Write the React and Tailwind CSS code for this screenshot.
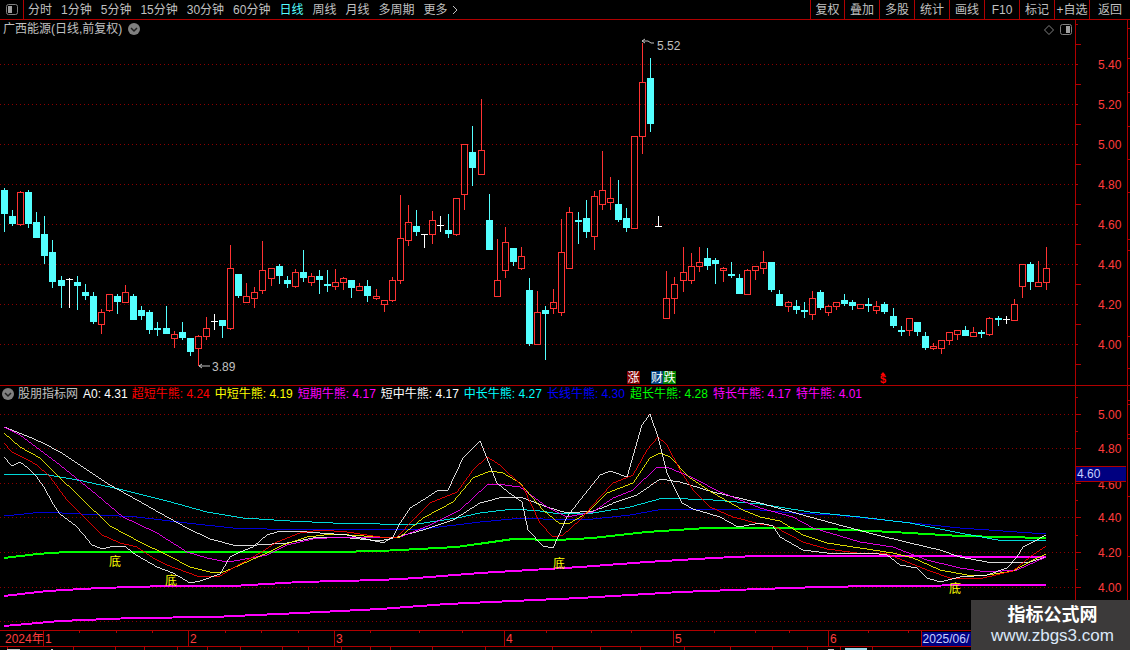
import React from "react";

const RED = "#ff3232";
const CYAN = "#54ffff";
const LINE = "#b00000";

// wickTop, wickBottom, bodyTop, bodyBottom, type (c = down, r = up, w = doji)
const candles = [
  [188,232,190,214,"c"],[210,226,216,224,"c"],[191,226,192,225,"r"],[190,228,192,224,"c"],[212,238,222,238,"c"],
  [216,264,234,256,"c"],[240,288,252,282,"c"],[276,308,280,286,"c"],[278,308,279,280,"w"],[276,310,282,286,"c"],
  [284,300,292,296,"c"],[292,324,296,322,"c"],[309,334,312,325,"r"],[294,312,294,311,"r"],[294,314,296,302,"c"],
  [285,303,292,303,"r"],[294,320,296,320,"c"],[306,320,310,316,"c"],[310,334,312,330,"c"],[322,336,328,330,"c"],
  [306,334,328,334,"c"],[331,348,334,339,"r"],[322,340,332,338,"c"],[338,356,338,352,"c"],[335,366,336,349,"r"],
  [317,340,328,337,"r"],[314,330,321,322,"w"],[320,338,320,326,"c"],[245,330,268,329,"r"],[274,298,274,296,"c"],
  [283,303,296,303,"r"],[287,308,292,299,"r"],[241,294,270,291,"r"],[268,286,268,279,"r"],[264,284,266,276,"c"],
  [276,288,280,284,"c"],[269,288,272,287,"r"],[250,282,272,278,"c"],[273,286,276,283,"r"],[270,294,276,280,"c"],
  [270,292,284,286,"c"],[269,290,282,287,"r"],[277,290,278,283,"r"],[280,298,280,288,"c"],[283,291,286,291,"r"],
  [280,302,286,296,"c"],[289,300,296,299,"r"],[300,312,300,305,"r"],[277,302,280,301,"r"],[195,284,238,281,"r"],
  [205,246,222,241,"r"],[210,236,226,232,"c"],[234,248,234,235,"w"],[211,244,220,235,"r"],[216,232,225,226,"w"],
  [214,238,230,234,"c"],[198,236,198,235,"r"],[144,210,144,195,"r"],[126,186,152,168,"c"],[99,175,150,175,"r"],
  [194,250,220,250,"c"],[239,297,280,297,"r"],[227,278,242,271,"r"],[248,266,248,262,"c"],[247,270,256,269,"r"],
  [278,346,290,344,"c"],[291,345,312,345,"r"],[306,360,310,314,"c"],[289,314,302,309,"r"],[219,316,252,313,"r"],
  [207,269,212,269,"r"],[212,244,220,222,"c"],[200,238,218,232,"c"],[191,250,196,237,"r"],[151,210,190,205,"r"],
  [177,210,198,203,"r"],[180,222,204,220,"c"],[208,232,218,228,"c"],[136,229,136,229,"r"],[43,154,82,137,"r"],
  [58,132,78,124,"c"],[216,227,226,227,"w"],[271,319,298,319,"r"],[277,314,284,299,"r"],[247,292,272,281,"r"],
  [253,284,266,281,"r"],[247,272,262,267,"r"],[248,270,258,266,"c"],[258,284,260,264,"c"],[267,282,268,271,"r"],
  [262,278,274,276,"c"],[274,294,278,294,"c"],[269,295,270,295,"r"],[266,280,266,271,"r"],[251,274,262,269,"r"],
  [262,292,262,290,"c"],[290,306,294,306,"c"],[301,312,302,307,"r"],[300,314,306,310,"c"],[302,318,310,312,"c"],
  [291,320,298,315,"r"],[290,310,292,308,"c"],[305,316,306,313,"r"],[302,310,302,307,"r"],[294,306,300,304,"c"],
  [300,310,302,306,"c"],[304,309,304,309,"r"],[298,312,304,306,"c"],[301,314,306,311,"r"],[302,314,304,312,"c"],
  [308,328,316,326,"c"],[326,336,330,332,"c"],[318,336,318,331,"r"],[322,336,322,332,"c"],[332,350,336,348,"c"],
  [343,350,346,349,"r"],[340,354,340,349,"r"],[332,345,332,341,"r"],[330,340,330,335,"r"],[326,336,330,336,"c"],
  [327,337,332,337,"r"],[330,338,332,334,"c"],[317,336,318,335,"r"],[316,326,318,320,"c"],[316,324,319,320,"w"],
  [299,321,304,321,"r"],[264,298,264,287,"r"],[262,290,264,282,"c"],[261,287,282,287,"r"],[247,290,268,283,"r"],
];

const lines = [
  { color: "#ff00ff", w: 2, d: "4,626 60,621 133,618 213,617 300,613 380,609 447,604 513,601 580,598 680,592 760,589 820,587 877,586 1007,585 1046,585" },
  { color: "#ff00ff", w: 2, d: "4,596 47,591 100,588 167,586 233,586 300,582 380,580 417,578 480,573 547,569 580,567 647,562 713,558 756,556 877,556 1046,557" },
  { color: "#00ff00", w: 2, d: "4,558 37,554 67,552 333,552 380,551 457,547 513,539 557,540 593,538 647,532 707,528 760,528 827,529 893,532 960,536 1046,538" },
  { color: "#0000ff", w: 0.85, d: "4,516 43,512 100,515 137,517 187,523 233,528 267,529 380,530 423,529 480,522 523,518 563,520 593,519 630,515 663,509 760,510 793,513 837,515 893,521 960,528 1046,534" },
  { color: "#00ffff", w: 0.85, d: "4,474 43,474 83,481 123,490 167,501 207,512 243,518 290,521 333,523 380,524 417,524 457,518 480,513 513,509 540,511 560,514 593,513 630,507 663,498 713,500 760,504 810,512 860,517 910,523 960,533 1003,541 1046,540" },
  { color: "#ffffff", w: 0.85, d: "4,427 27,436 43,443 60,452 87,470 110,485 137,500 160,513 187,528 210,539 233,545 257,545 287,543 313,538 340,537 380,541 393,538 423,530 453,520 480,503 503,497 523,498 547,507 567,513 593,511 613,503 637,495 660,479 680,482 713,492 760,503 810,517 843,526 877,535 910,543 940,550 960,557 987,562 1013,563 1030,562 1046,557" },
  { color: "#ff00ff", w: 0.85, d: "4,427 20,435 40,450 60,465 97,495 123,517 157,533 187,552 207,558 227,562 240,560 267,555 287,545 313,539 340,537 380,538 400,537 430,525 460,510 487,485 497,484 520,487 547,507 567,517 593,512 613,498 633,490 657,467 667,467 693,478 720,492 760,508 793,517 813,528 860,542 893,547 927,560 960,568 987,572 1017,570 1046,557" },
  { color: "#ffff00", w: 0.85, d: "4,433 20,447 40,458 57,475 80,497 110,526 140,542 167,555 190,567 210,572 223,572 233,568 267,553 283,545 307,537 333,534 380,537 400,537 423,518 453,502 473,478 490,471 503,473 520,483 543,510 560,524 570,523 587,513 607,493 633,483 650,458 660,453 670,457 690,478 713,493 743,510 760,517 780,521 803,535 827,543 860,548 893,553 913,558 940,570 967,575 987,575 1013,571 1033,560 1046,554" },
  { color: "#ff0000", w: 0.85, d: "4,443 12,452 28,460 37,465 50,477 67,500 80,513 102,535 120,543 137,547 153,558 167,565 197,576 220,576 233,568 260,553 277,542 300,533 320,530 347,532 380,537 397,537 413,520 430,503 457,492 473,470 487,457 500,465 523,487 540,523 553,537 563,535 580,520 600,497 613,483 633,475 647,450 658,437 667,445 680,470 693,490 710,507 733,517 760,524 773,526 790,535 803,542 827,549 857,553 887,554 907,562 927,570 950,578 983,578 1013,571 1030,557 1046,546" },
  { color: "#ffffff", w: 0.85, d: "4,457 12,466 20,462 28,468 36,476 44,487 52,502 60,514 68,520 76,526 84,535 92,545 102,549 110,547 125,546 133,553 143,559 157,567 173,573 190,583 200,581 220,574 230,557 240,552 253,547 267,535 277,532 293,531 320,533 347,535 380,542 383,543 393,537 400,523 410,508 423,500 438,490 448,490 463,458 480,441 497,483 508,492 522,502 528,530 543,546 553,548 567,517 580,500 600,475 610,471 627,477 642,425 650,414 658,437 667,473 682,503 693,509 720,517 738,527 760,523 773,526 780,537 803,550 827,553 870,553 887,555 900,565 917,568 927,578 940,582 960,577 987,575 1007,568 1017,557 1023,547 1033,542 1046,535" },
];

const bottoms = [[115, 561], [171, 580], [559, 563], [955, 588]];

const legend = [
  ["A0: 4.31", "-mr-px text-white"],
  ["超短牛熊: 4.24", "text-[#ff0000]"],
  ["中短牛熊: 4.19", "text-[#ffff00]"],
  ["短期牛熊: 4.17", "text-[#ff00ff]"],
  ["短中牛熊: 4.17", "text-white"],
  ["中长牛熊: 4.27", "text-[#00ffff]"],
  ["长线牛熊: 4.30", "text-[#0000ff]"],
  ["超长牛熊: 4.28", "text-[#00ff00]"],
  ["特长牛熊: 4.17", "text-[#ff00ff]"],
  ["特牛熊: 4.01", "text-[#ff00ff]"],
];

function CircleChevron() {
  return (
    <svg width="12" height="12" viewBox="0 0 12 12" className="shrink-0">
      <circle cx="6" cy="6" r="6" fill="#808080" />
      <path d="M3 5 L6 8 L9 5" fill="none" stroke="#202020" strokeWidth="1.5" />
    </svg>
  );
}

function PanelIcon({ flip }) {
  return (
    <svg width="12" height="11" viewBox="0 0 12 11" className="shrink-0">
      <rect x="0.5" y="0.5" width="11" height="10" rx="2" fill="#000" stroke="#808080" />
      <rect x={flip ? 6 : 2} y="2" width="4" height="7" fill="#a0a0a0" />
    </svg>
  );
}

function Grid({ ys }) {
  return ys.map((y) => (
    <line key={y} x1="0" x2="1075" y1={y + 0.5} y2={y + 0.5} stroke="#8c0000" strokeDasharray="1 3" />
  ));
}

function Candle({ c, i }) {
  const [wt, wb, bt, bb, type] = c;
  const x = Math.round(4 + i * 8.0775);
  if (type === "w") {
    return (
      <g fill="#ffffff" shapeRendering="crispEdges">
        <rect x={x} y={wt} width="1" height={wb - wt} />
        <rect x={x - 3} y={bt} width="7" height="1" />
      </g>
    );
  }
  if (type === "c") {
    return (
      <g fill={CYAN} shapeRendering="crispEdges">
        <rect x={x} y={wt} width="1" height={wb - wt} />
        <rect x={x - 3} y={bt} width="7" height={bb - bt} />
      </g>
    );
  }
  return (
    <g shapeRendering="crispEdges">
      <rect x={x} y={wt} width="1" height={bt - wt} fill={RED} />
      <rect x={x} y={bb} width="1" height={wb - bb} fill={RED} />
      <rect x={x - 2.5} y={bt + 0.5} width="6" height={bb - bt - 1} fill="none" stroke={RED} />
    </g>
  );
}

function PriceChart() {
  return (
    <svg width="1075" height="365" viewBox="0 20 1075 365" className="block">
      <Grid ys={[64, 104, 144, 184, 224, 264, 304, 344]} />
      {candles.map((c, i) => (
        <Candle key={i} c={c} i={i} />
      ))}
      <g stroke="#c0c0c0" fill="none">
        <path d="M642 41 L645 39 M642 41 L645 43 M642 41 L648 41 L651 43 L654 43" />
        <path d="M199 366 L210 366 M199 366 L202 364 M199 366 L202 368" />
      </g>
      <text x="657" y="50" fontSize="12" fill="#c0c0c0">5.52</text>
      <text x="212" y="371" fontSize="12" fill="#c0c0c0">3.89</text>
      <rect x="627" y="371" width="13" height="13" fill="#800000" />
      <text x="627.5" y="382" fontSize="12" fill="#ffffff">涨</text>
      <rect x="651" y="371" width="12" height="13" fill="#004080" />
      <text x="651" y="382" fontSize="12" fill="#ffffff">财</text>
      <rect x="663" y="371" width="13" height="13" fill="#008000" />
      <text x="663.5" y="382" fontSize="12" fill="#ffffff">跌</text>
      <path d="M883 372 L885.5 375 L880.5 375 Z" fill="#ff0000" />
      <text x="880" y="383" fontSize="11" fontWeight="700" fill="#ff0000">$</text>
    </svg>
  );
}

function IndicatorChart() {
  return (
    <svg width="1075" height="244" viewBox="0 386 1075 244" className="block">
      <Grid ys={[414, 448, 483, 517, 552, 587, 621]} />
      {lines.map((l, i) => (
        <polyline key={i} points={l.d} fill="none" stroke={l.color} strokeWidth={l.w} shapeRendering="crispEdges" />
      ))}
      {bottoms.map(([x, y]) => (
        <text key={x} x={x} y={y + 5} fontSize="12" textAnchor="middle" fill="#ffff00">底</text>
      ))}
    </svg>
  );
}

function Axis({ top, height, labels, first, ticks }) {
  return (
    <svg width="51" height={height} viewBox={`1076 ${top} 51 ${height}`} className="block">
      {ticks.map((y, i) => (
        <rect key={y} x="1076" y={y} width={i % 2 === first ? 5 : 2} height="1" fill="#b00000" />
      ))}
      {labels.map(([t, y]) => (
        <text key={t} x="1098" y={y + 4.5} fontSize="12" fill="#ff3c3c">{t}</text>
      ))}
    </svg>
  );
}

function RightStrip({ height, marks }) {
  return (
    <svg width="4" height={height} className="block">
      {marks.map((y) => (
        <rect key={y} x="0" y={y} width="4" height="1" fill="#b00000" />
      ))}
    </svg>
  );
}

const topTicks = [24, 44, 64, 84, 104, 124, 144, 164, 184, 204, 224, 244, 264, 284, 304, 324, 344, 364];
const lowTicks = [397, 414, 431, 448, 466, 483, 500, 517, 535, 552, 569, 587, 604, 621];

function DateAxis() {
  const top = [79, 116, 152, 225, 261, 298, 370, 419, 462, 546, 591, 631, 714, 755, 789, 868, 908];
  const months = [[43, "1"], [188, "2"], [334, "3"], [504, "4"], [673, "5"], [828, "6"]];
  const bottom = [7, 73, 115, 144, 177, 207, 240, 282, 308, 341, 370, 390, 432, 485, 552, 600, 640, 684, 730, 772, 807, 840, 872];
  return (
    <svg width="1130" height="20" viewBox="0 630 1130 20" className="block">
      <g fill={LINE} shapeRendering="crispEdges">
        <rect x="0" y="630" width="1130" height="1" />
        <rect x="0" y="646" width="1130" height="1" />
        {top.map((x) => (
          <rect key={x} x={x} y="631" width="1" height="2" />
        ))}
        {months.map(([x]) => (
          <rect key={x} x={x} y="631" width="1" height="15" />
        ))}
        {bottom.map((x) => (
          <rect key={x} x={x} y="647" width="1" height="3" />
        ))}
        <rect x="921" y="631" width="1" height="15" />
      </g>
      <text x="5" y="643" fontSize="12" fill="#ff3c3c">2024年</text>
      {months.map(([x, t]) => (
        <text key={x} x={x + 2} y="643" fontSize="12" fill="#ff3c3c">{t}</text>
      ))}
      <rect x="922" y="632" width="50" height="14" fill="#000080" />
      <text x="922.5" y="643" fontSize="12" fill="#c8d0ff">2025/06/</text>
      <g fill="#c0c0c0" shapeRendering="crispEdges">
        <rect x="7" y="649" width="13" height="1" />
        <rect x="51" y="649" width="2" height="1" />
        <rect x="828" y="649" width="6" height="1" />
        <rect x="845" y="648" width="22" height="2" fill="#9fd8e8" />
      </g>
    </svg>
  );
}

export default function App() {
  const leftTabs = ["分时", "1分钟", "5分钟", "15分钟", "30分钟", "60分钟", "日线", "周线", "月线", "多周期"];
  const rightBtns = [
    ["复权", "w-[34px]"], ["叠加", "w-[35px]"], ["多股", "w-[35px]"], ["统计", "w-[35px]"], ["画线", "w-[35px]"],
    ["F10", "w-[35px]"], ["标记", "w-[35px]"], ["+自选", "w-[35px]"], ["返回", "w-[41px]"],
  ];

  return (
    <div className="relative flex h-[650px] w-[1130px] flex-col overflow-hidden bg-black text-xs leading-none text-[#c0c0c0] font-['Liberation_Sans','Noto_Sans_CJK_SC',sans-serif]">
      {/* toolbar */}
      <div className="flex h-5 shrink-0 items-stretch border-b border-[#b00000]">
        <div className="flex w-6 items-center justify-center border-r border-[#b00000]">
          <PanelIcon />
        </div>
        <div className="flex flex-1 items-center gap-[9px] pl-1">
          {leftTabs.map((t) => (
            <span key={t} className={t === "日线" ? "text-[#54ffff]" : ""}>{t}</span>
          ))}
          <span className="flex items-center gap-1">
            更多
            <svg width="6" height="10" viewBox="0 0 6 10">
              <path d="M1 1 L5 5 L1 9" fill="none" stroke="#c0c0c0" />
            </svg>
          </span>
        </div>
        <div className="flex">
          {rightBtns.map(([t, w]) => (
            <div key={t} className={`flex items-center justify-center border-l border-[#b00000] ${w}`}>{t}</div>
          ))}
        </div>
      </div>

      {/* price pane */}
      <div className="flex h-[366px] shrink-0 border-b border-[#b00000]">
        <div className="relative w-[1075px]">
          <PriceChart />
          <div className="absolute left-[3px] top-[3px] flex items-center gap-[6px]">
            <span>广西能源(日线,前复权)</span>
            <CircleChevron />
          </div>
          <div className="absolute right-[3px] top-1 flex items-center gap-[6px]">
            <svg width="10" height="10" viewBox="0 0 10 10">
              <path d="M5 0.5 L9.5 5 L5 9.5 L0.5 5 Z" fill="none" stroke="#808080" />
            </svg>
            <PanelIcon flip />
          </div>
        </div>
        <div className="border-l border-[#b00000]">
          <Axis
            top={20}
            height={365}
            ticks={topTicks}
            first={1}
            labels={[["5.40", 64], ["5.20", 104], ["5.00", 144], ["4.80", 184], ["4.60", 224], ["4.40", 264], ["4.20", 304], ["4.00", 344]]}
          />
        </div>
        <div className="border-l border-[#b00000]">
          <RightStrip height={365} marks={[8, 38, 72, 106, 139, 172, 219, 230, 316, 348]} />
        </div>
      </div>

      {/* indicator pane */}
      <div className="flex h-[244px] shrink-0">
        <div className="relative w-[1075px]">
          <IndicatorChart />
          <div className="absolute left-[2px] top-[2px] flex items-center gap-[5px] whitespace-nowrap">
            <span className="flex items-center gap-1">
              <CircleChevron />
              <span>股朋指标网</span>
            </span>
            {legend.map(([t, c]) => (
              <span key={t} className={c}>{t}</span>
            ))}
          </div>
        </div>
        <div className="relative border-l border-[#b00000]">
          <Axis
            top={386}
            height={244}
            ticks={lowTicks}
            first={1}
            labels={[["5.00", 414], ["4.80", 448], ["4.60", 484], ["4.40", 517], ["4.20", 552], ["4.00", 587]]}
          />
          <div className="absolute left-0 top-[80px] flex h-4 w-[50px] items-center border-y border-[#b00000] bg-[#000080] pl-px text-[#c8d0ff]">4.60</div>
        </div>
        <div className="border-l border-[#b00000]">
          <RightStrip height={244} marks={[14, 18, 48, 52, 110, 170]} />
        </div>
      </div>

      <DateAxis />

      {/* site stamp over the corner */}
      <div className="absolute bottom-0 right-0 flex h-[50px] w-[159px] flex-col items-center bg-[#3c3a3a] pl-[4px] pt-[5px]">
        <span className="text-[18px] font-bold leading-5 text-white">指标公式网</span>
        <span className="mt-[2px] text-[17px] leading-[18px] text-[#dbe8f8]">www.zbgs3.com</span>
      </div>
    </div>
  );
}
